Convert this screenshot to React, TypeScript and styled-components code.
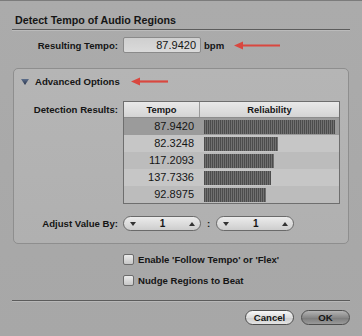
import React from "react";
import styled, { createGlobalStyle } from "styled-components";

const GlobalStyle = createGlobalStyle`
    html, body {
        margin: 0;
        padding: 0;
        background: #a9a9a9;
    }
    * {
        box-sizing: border-box;
    }
`;

const Window = styled.div`
    width: 362px;
    min-height: 336px;
    padding: 0 12px;
    background: linear-gradient(#ababab, #a7a7a7);
    border-top: 1px solid #7c7c7c;
    font-family: "Liberation Sans", Arial, sans-serif;
    color: #151515;
`;

const Title = styled.div`
    height: 29px;
    padding: 12px 0 0 3px;
    font-size: 10.7px;
    font-weight: bold;
    line-height: 14px;
    border-bottom: 1px solid #5c5c5c;
    box-shadow: 0 1px 0 rgba(255, 255, 255, 0.2);
`;

const FormRow = styled.div<{ $top: number; $align?: string }>`
    display: flex;
    align-items: ${(props) => props.$align || "center"};
    margin-top: ${(props) => props.$top}px;
`;

const Label = styled.div<{ $width: number; $pad?: number }>`
    width: ${(props) => props.$width}px;
    margin-right: 5px;
    padding-top: ${(props) => props.$pad || 0}px;
    text-align: right;
    font-size: 9.6px;
    font-weight: bold;
    line-height: 13px;
    white-space: nowrap;
`;

const Input = styled.div`
    width: 78px;
    height: 16px;
    padding-right: 4px;
    border: 1px solid #8a8a8a;
    border-radius: 2px;
    background: linear-gradient(#cfcfcf, #dadada);
    text-align: right;
    font-size: 11px;
    line-height: 14px;
`;

const Unit = styled.span`
    margin-left: 3px;
    font-size: 9.6px;
    font-weight: bold;
`;

const Arrow = styled.svg<{ $gap: number }>`
    margin-left: ${(props) => props.$gap}px;
    display: block;
`;

const GroupBox = styled.div`
    margin: 15px 1px 0;
    padding: 6px 0 12px;
    border: 1px solid #8e8e8e;
    border-radius: 5px;
    background: linear-gradient(#b5b5b5, #b0b0b0);
`;

const Disclosure = styled.div`
    display: flex;
    align-items: center;
    height: 13px;
    padding-left: 7px;
`;

const DisclosureLabel = styled.span`
    margin-left: 6px;
    font-size: 9.6px;
    font-weight: bold;
`;

const Table = styled.div`
    width: 217px;
    border: 1px solid #6e6e6e;
`;

const HeaderRow = styled.div`
    display: grid;
    grid-template-columns: 76px 139px;
    height: 16px;
    border-bottom: 1px solid #8c8c8c;
    background: linear-gradient(#e9e9e9, #d4d4d4);
`;

const HeaderCell = styled.div<{ $divider?: boolean }>`
    border-right: ${(props) => (props.$divider ? "1px solid #9a9a9a" : "none")};
    text-align: center;
    font-size: 9.4px;
    font-weight: bold;
    line-height: 15px;
`;

const DataRow = styled.div<{ $shade: string }>`
    display: grid;
    grid-template-columns: 76px 139px;
    height: 17px;
    background: ${(props) => props.$shade};
`;

const TempoCell = styled.div`
    padding-right: 6px;
    text-align: right;
    font-size: 11px;
    line-height: 17px;
`;

const BarCell = styled.div`
    display: flex;
    align-items: center;
    padding-left: 4px;
`;

const Bar = styled.div`
    height: 14px;
    background: repeating-linear-gradient(90deg, #4c4c4c 0 1px, #707070 1px 2px);
`;

const Stepper = styled.div`
    display: flex;
    align-items: center;
    justify-content: space-between;
    width: 78px;
    height: 15px;
    padding: 0 5px 0 6px;
    border: 1px solid #6a6a6a;
    border-radius: 8px;
    background: linear-gradient(#ececec, #cdcdcd);
    font-size: 10px;
    font-weight: bold;
`;

const Colon = styled.span`
    margin: 0 6px;
    font-size: 9.6px;
    font-weight: bold;
`;

const CheckRow = styled.div<{ $top: number }>`
    display: flex;
    align-items: center;
    height: 11px;
    margin: ${(props) => props.$top}px 0 0 111px;
`;

const Checkbox = styled.span`
    width: 11px;
    height: 11px;
    border: 1px solid #6c6c6c;
    border-radius: 2px;
    background: linear-gradient(#ebebeb, #c6c6c6);
`;

const CheckLabel = styled.span`
    margin-left: 4px;
    font-size: 9.6px;
    font-weight: bold;
    white-space: nowrap;
`;

const Separator = styled.div`
    margin-top: 14px;
    height: 1px;
    background: #5c5c5c;
    box-shadow: 0 1px 0 rgba(255, 255, 255, 0.2);
`;

const Buttons = styled.div`
    display: flex;
    justify-content: flex-end;
    gap: 7px;
    margin-top: 9px;
`;

const Button = styled.div<{ $primary?: boolean }>`
    width: 49px;
    height: 15px;
    border: 1px solid #4e4e4e;
    border-radius: 8px;
    background: ${(props) =>
        props.$primary
            ? "linear-gradient(#b4b4b4, #888888 50%, #7a7a7a 51%, #9a9a9a)"
            : "linear-gradient(#f7f7f7, #dcdcdc 50%, #cccccc 51%, #e4e4e4)"};
    text-align: center;
    font-size: 9.6px;
    font-weight: bold;
    line-height: 13px;
`;

const results = [
    { tempo: "87.9420", reliability: 1 },
    { tempo: "82.3248", reliability: 0.565 },
    { tempo: "117.2093", reliability: 0.534 },
    { tempo: "137.7336", reliability: 0.511 },
    { tempo: "92.8975", reliability: 0.473 },
];

const shades = ["#9b9b9b", "#c6c6c6", "#bcbcbc", "#c6c6c6", "#bcbcbc"];

function RedArrow({ length, gap }: { length: number; gap: number }) {
    return (
        <Arrow $gap={gap} width={length} height={9} viewBox={`0 0 ${length} 9`}>
            <line x1={7} y1={4.5} x2={length} y2={4.5} stroke="#d9473f" strokeWidth={2.2} />
            <polygon points="0,4.5 9,0.5 9,8.5" fill="#d9473f" />
        </Arrow>
    );
}

function Triangle({ up }: { up?: boolean }) {
    return (
        <svg width={6} height={4} viewBox="0 0 6 4">
            <polygon points={up ? "0,4 6,4 3,0" : "0,0 6,0 3,4"} fill="#333" />
        </svg>
    );
}

function App() {
    return (
        <>
            <GlobalStyle />
            <Window>
                <Title>Detect Tempo of Audio Regions</Title>
                <FormRow $top={7}>
                    <Label $width={106}>Resulting Tempo:</Label>
                    <Input>87.9420</Input>
                    <Unit>bpm</Unit>
                    <RedArrow length={46} gap={10} />
                </FormRow>
                <GroupBox>
                    <Disclosure>
                        <svg width={8} height={6} viewBox="0 0 8 6">
                            <defs>
                                <linearGradient id="tri" x1="0" y1="0" x2="0" y2="1">
                                    <stop offset="0" stopColor="#5d6f8c" />
                                    <stop offset="1" stopColor="#27324a" />
                                </linearGradient>
                            </defs>
                            <polygon points="0,0 8,0 4,6" fill="url(#tri)" />
                        </svg>
                        <DisclosureLabel>Advanced Options</DisclosureLabel>
                        <RedArrow length={37} gap={11} />
                    </Disclosure>
                    <FormRow $top={13} $align="flex-start">
                        <Label $width={104} $pad={2}>
                            Detection Results:
                        </Label>
                        <Table>
                            <HeaderRow>
                                <HeaderCell $divider>Tempo</HeaderCell>
                                <HeaderCell>Reliability</HeaderCell>
                            </HeaderRow>
                            {results.map((r, i) => (
                                <DataRow key={r.tempo} $shade={shades[i]}>
                                    <TempoCell>{r.tempo}</TempoCell>
                                    <BarCell>
                                        <Bar style={{ width: Math.round(131 * r.reliability) }} />
                                    </BarCell>
                                </DataRow>
                            ))}
                        </Table>
                    </FormRow>
                    <FormRow $top={12}>
                        <Label $width={104}>Adjust Value By:</Label>
                        <Stepper>
                            <Triangle />
                            <span>1</span>
                            <Triangle up />
                        </Stepper>
                        <Colon>:</Colon>
                        <Stepper>
                            <Triangle />
                            <span>1</span>
                            <Triangle up />
                        </Stepper>
                    </FormRow>
                </GroupBox>
                <CheckRow $top={10}>
                    <Checkbox />
                    <CheckLabel>Enable 'Follow Tempo' or 'Flex'</CheckLabel>
                </CheckRow>
                <CheckRow $top={10}>
                    <Checkbox />
                    <CheckLabel>Nudge Regions to Beat</CheckLabel>
                </CheckRow>
                <Separator />
                <Buttons>
                    <Button>Cancel</Button>
                    <Button $primary>OK</Button>
                </Buttons>
            </Window>
        </>
    );
}

export default App;
